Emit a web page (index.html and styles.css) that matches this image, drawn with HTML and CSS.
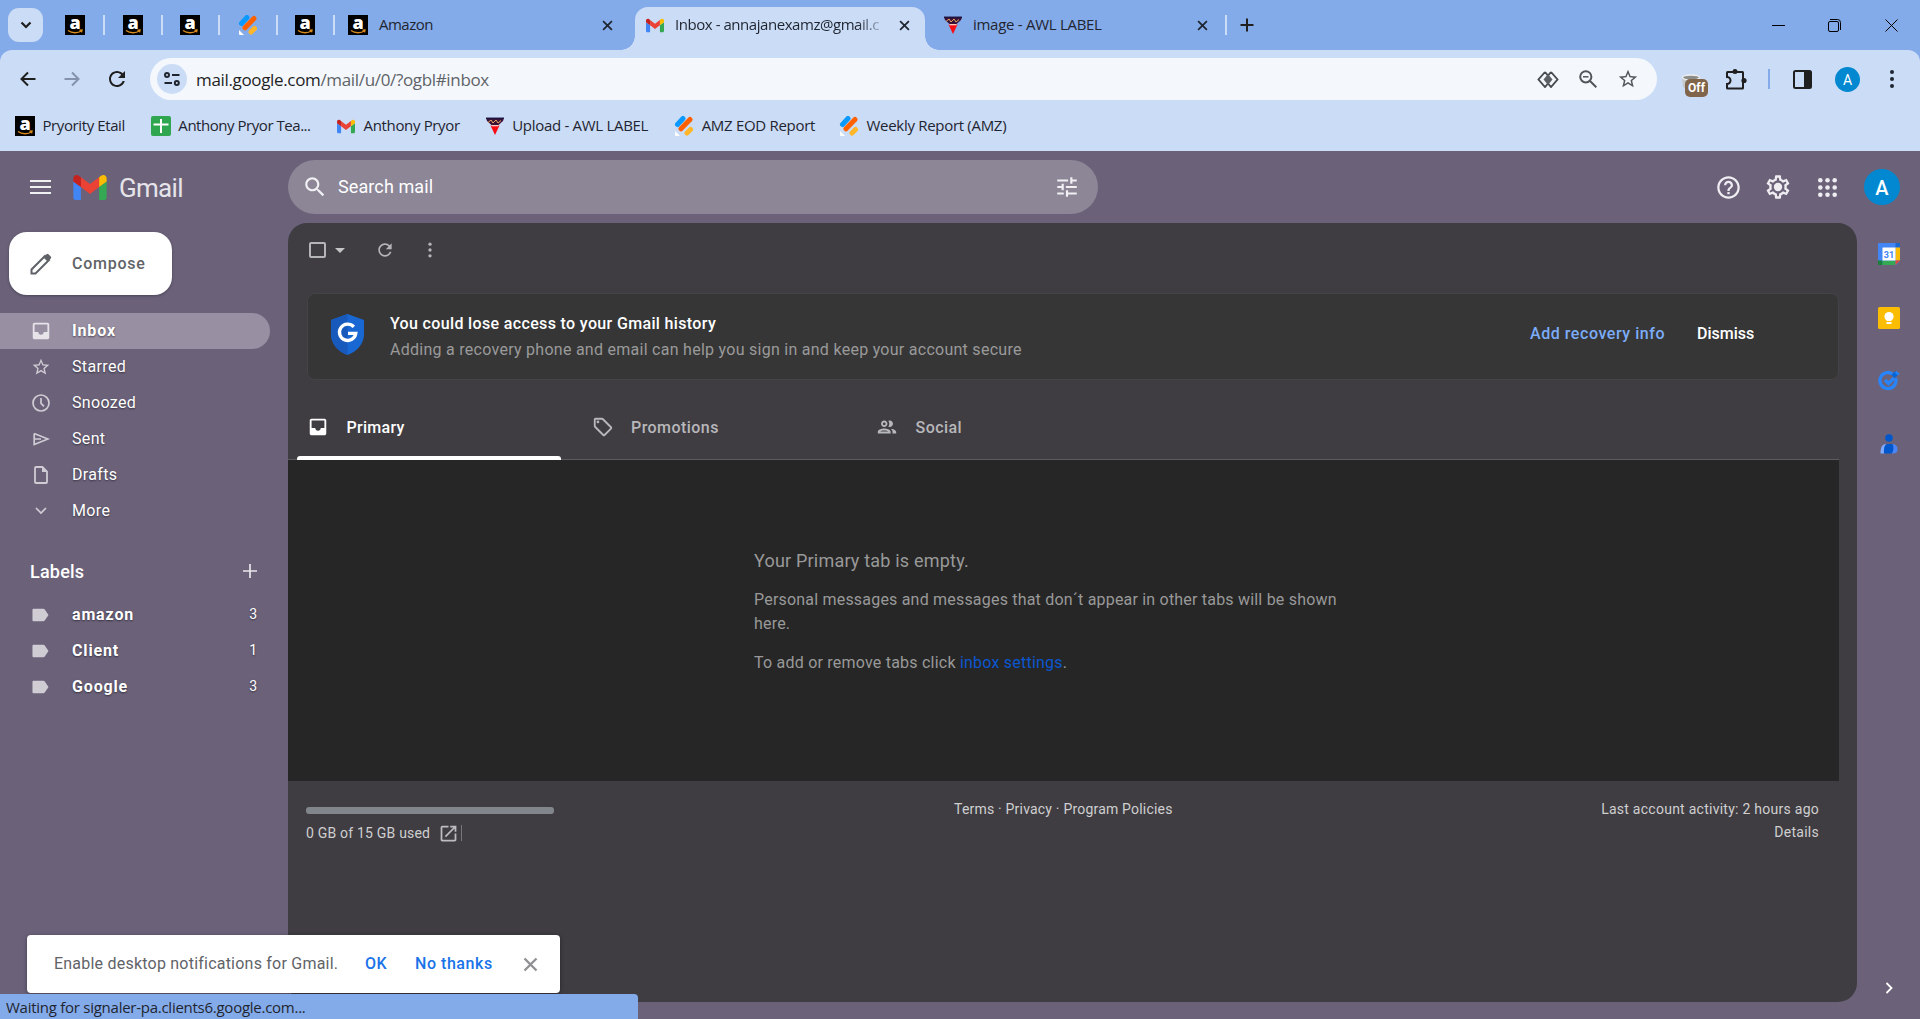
FILE: index.html
```html
<!DOCTYPE html>
<html lang="en">
<head>
    <meta charset="UTF-8">
    <meta name="viewport" content="width=device-width, initial-scale=1.0">
    <title>Inbox - Gmail</title>
    <link rel="stylesheet" href="styles.css">
</head>
<body>
    <!-- Shared icons -->
    <svg class="sprite" aria-hidden="true">
        <symbol id="amazon" viewBox="0 0 20 20">
            <rect width="20" height="20" fill="#000"/>
            <text x="10" y="14" text-anchor="middle" font-family="Open Sans, sans-serif" font-weight="800" font-size="18" fill="#fff">a</text>
            <path d="M3 15.500c4 3 10 3 13.500.3M14.500 15.200l2.500-.2-.5 2.300" fill="none" stroke="#d98a1c" stroke-width="1.400"/>
        </symbol>
        <symbol id="jot" viewBox="0 0 20 20">
            <path d="M3.500 8.500l5.500-6" stroke="#0a99ff" stroke-width="5" stroke-linecap="round"/>
            <path d="M7 12.800l9-9.300" stroke="#ff6100" stroke-width="5" stroke-linecap="round"/>
            <path d="M13 17l3.500-3.500" stroke="#ffb629" stroke-width="5" stroke-linecap="round"/>
            <path d="M1 15l5 5H2a1 1 0 0 1-1-1z" fill="#fff"/>
        </symbol>
        <symbol id="gmail" viewBox="52 42 88 66">
            <path fill="#4285f4" d="M58 108h14V74L52 59v43c0 3.320 2.690 6 6 6"/>
            <path fill="#34a853" d="M120 108h14c3.320 0 6-2.690 6-6V59l-20 15"/>
            <path fill="#fbbc04" d="M120 48v26l20-15v-8c0-7.420-8.470-11.650-14.400-7.200"/>
            <path fill="#ea4335" d="M72 74V48l24 18 24-18v26L96 92"/>
            <path fill="#c5221f" d="M52 51v8l20 15V48l-5.600-4.200c-5.940-4.450-14.400-.22-14.400 7.200"/>
        </symbol>
        <symbol id="awl" viewBox="0 0 20 20">
            <path d="M1 2h18l-1 3-4.500 4h-7L2 5z" fill="#3a1238"/>
            <path d="M3 6.500L6 4l2 3 3-3 2 3 3-2.500" fill="none" stroke="#e8a860" stroke-width="1"/>
            <path d="M1 2.300h18" stroke="#1d1440" stroke-width="1.500"/>
            <path d="M5.500 9.500h9L10 19z" fill="#f80b12"/>
            <path d="M6.500 9.700h7" stroke="#ffd5c8" stroke-width="1.200"/>
        </symbol>
        <symbol id="sheet" viewBox="0 0 20 20">
            <rect width="20" height="20" rx="2" fill="#31a650"/>
            <path d="M10 3v14M2.500 8.500h15" stroke="#fff" stroke-width="2"/>
        </symbol>
        <symbol id="x" viewBox="0 0 10 10"><path d="M1 1l8 8M9 1L1 9" fill="none" stroke="currentColor" stroke-width="1.600"/></symbol>
        <symbol id="star" viewBox="0 0 24 24"><path fill="currentColor" d="M22 9.240l-7.190-.62L12 2 9.190 8.630 2 9.240l5.460 4.730L5.820 21 12 17.270 18.180 21l-1.630-7.030L22 9.240zM12 15.400l-3.760 2.270 1-4.280-3.320-2.880 4.380-.38L12 6.100l1.710 4.040 4.380.38-3.320 2.880 1 4.280L12 15.400z"/></symbol>
        <symbol id="refresh" viewBox="0 0 24 24"><path fill="currentColor" d="M17.650 6.350C16.200 4.900 14.210 4 12 4c-4.420 0-7.990 3.580-7.990 8s3.570 8 7.990 8c3.730 0 6.840-2.550 7.730-6h-2.080c-.82 2.330-3.040 4-5.650 4-3.310 0-6-2.690-6-6s2.690-6 6-6c1.660 0 3.140.69 4.220 1.780L13 11h7V4l-2.350 2.350z"/></symbol>
        <symbol id="dots" viewBox="0 0 24 24"><g fill="currentColor"><circle cx="12" cy="5" r="2"/><circle cx="12" cy="12" r="2"/><circle cx="12" cy="19" r="2"/></g></symbol>
        <symbol id="inbox" viewBox="0 0 24 24"><path fill="currentColor" d="M19 3H5c-1.100 0-2 .9-2 2v14c0 1.100.89 2 2 2h14c1.100 0 2-.9 2-2V5c0-1.100-.9-2-2-2zm0 10h-4c0 1.660-1.350 3-3 3s-3-1.340-3-3H5V5h14v8z"/></symbol>
        <symbol id="label" viewBox="0 0 18 14"><path fill="currentColor" d="M1.500 0.500H12a2 2 0 0 1 1.500.8L17.500 7l-4 5.700a2 2 0 0 1-1.500.8H1.500A1 1 0 0 1 .5 12.500v-11a1 1 0 0 1 1-1z"/></symbol>
    </svg>

    <!-- Browser chrome -->
    <div class="tabstrip">
        <div class="tab-search"><svg width="12" height="8" viewBox="0 0 12 8"><path d="M1.500 1.500L6 6l4.500-4.500" fill="none" stroke="#1f1f1f" stroke-width="2.200"/></svg></div>
        <div class="pinned"><svg class="fav"><use href="#amazon"/></svg></div>
        <div class="pinned"><svg class="fav"><use href="#amazon"/></svg></div>
        <div class="pinned"><svg class="fav"><use href="#amazon"/></svg></div>
        <div class="pinned"><svg class="fav"><use href="#jot"/></svg></div>
        <div class="pinned"><svg class="fav"><use href="#amazon"/></svg></div>
        <div class="tab tab-first">
            <svg class="fav"><use href="#amazon"/></svg>
            <span class="tab-title t-amazon">Amazon</span>
            <svg class="close"><use href="#x"/></svg>
        </div>
        <div class="tab active">
            <svg class="fav gm"><use href="#gmail"/></svg>
            <span class="tab-title t-inbox">Inbox - annajanexamz@gmail.c</span>
            <svg class="close"><use href="#x"/></svg>
        </div>
        <div class="tab tab-last">
            <svg class="fav"><use href="#awl"/></svg>
            <span class="tab-title t-image">image - AWL LABEL</span>
            <svg class="close"><use href="#x"/></svg>
        </div>
        <svg class="new-tab" width="14" height="14" viewBox="0 0 14 14"><path d="M7 0.500v13M.5 7h13" stroke="#1f1f1f" stroke-width="2"/></svg>
        <div class="window-buttons">
            <svg width="13" height="13" viewBox="0 0 13 13"><path d="M0 6.500h13" stroke="#000"/></svg>
            <svg width="13" height="13" viewBox="0 0 13 13"><path d="M2 .5h7.500a3 3 0 0 1 3 3V11" fill="none" stroke="#000"/><rect x=".5" y="2.500" width="10" height="10" rx="1.500" fill="none" stroke="#000"/></svg>
            <svg width="13" height="13" viewBox="0 0 13 13"><path d="M.5.5l12 12M12.500.5l-12 12" stroke="#000"/></svg>
        </div>
    </div>

    <div class="chrome-bar">
        <div class="toolbar">
            <svg class="nav-icon" viewBox="0 0 16 16"><path d="M15.500 8H2M8 1.500L1.500 8 8 14.500" fill="none" stroke="#1f1f1f" stroke-width="2"/></svg>
            <svg class="nav-icon fwd" viewBox="0 0 16 16"><path d="M.5 8H14M8 1.500L14.500 8 8 14.500" fill="none" stroke="#8492ab" stroke-width="2"/></svg>
            <svg class="reload"><use href="#refresh"/></svg>
            <div class="omnibox">
                <div class="site-info"><svg width="16" height="14" viewBox="0 0 16 14" fill="none" stroke="#1f2530" stroke-width="2"><circle cx="3" cy="3" r="2"/><path d="M8 3h7.500M.5 11H8"/><circle cx="12.800" cy="11" r="2"/></svg></div>
                <span class="url">mail.google.com<span>/mail/u/0/?ogbl#inbox</span></span>
                <svg class="omni-icon" width="22" height="17" viewBox="0 0 22 17"><path d="M8 1L1.500 8.500 8 16l3-3.500M14 1l6.500 7.500L14 16l-3-3.500M8 1l3 3.500L14 1" fill="none" stroke="#474a4e" stroke-width="1.900"/><path d="M11 3l4.500 5.500L11 14 6.500 8.500z" fill="#5c5f63"/></svg>
                <svg class="omni-icon" width="18" height="18" viewBox="0 0 18 18" fill="none" stroke="#515458" stroke-width="2"><circle cx="6.800" cy="6.800" r="5.600"/><path d="M11 11l6.300 6.300"/><path d="M4 6.800h5.500" stroke-width="1.500"/></svg>
                <svg class="omni-icon star"><use href="#star"/></svg>
            </div>
            <div class="bucket">
                <svg width="20" height="16" viewBox="0 0 20 16"><path d="M1 4l1 9 3 2V5z" fill="#c6c9cc"/><ellipse cx="10" cy="3.500" rx="8.500" ry="2.500" fill="#8c8c88" stroke="#eee" stroke-width="1.300"/></svg>
                <span class="badge">Off</span>
            </div>
            <svg class="puzzle" width="22" height="21" viewBox="0 0 22 21"><path d="M2.500 3h15a.5.5 0 0 1 .5.500V19a.5.5 0 0 1-.5.500h-15A.5.5 0 0 1 2 19v-4a3.400 3.400 0 0 0 0-7V3.500A.5.5 0 0 1 2.500 3z" fill="none" stroke="#1f1f1f" stroke-width="2"/><circle cx="10" cy="2.500" r="2.500" fill="#1f1f1f"/><circle cx="19" cy="11.500" r="2.600" fill="#1f1f1f"/></svg>
            <div class="divider"></div>
            <svg width="19" height="19" viewBox="0 0 19 19"><rect x="1" y="1" width="17" height="17" rx="1.500" fill="none" stroke="#1f1f1f" stroke-width="2"/><path d="M11 1h7v17h-7z" fill="#1f1f1f"/></svg>
            <div class="avatar avatar-sm">A</div>
            <svg class="menu-dots"><use href="#dots"/></svg>
        </div>
        <div class="bookmarks">
            <svg class="fav"><use href="#amazon"/></svg><span class="b1">Pryority Etail</span>
            <svg class="fav"><use href="#sheet"/></svg><span class="b2">Anthony Pryor Tea...</span>
            <svg class="fav gm"><use href="#gmail"/></svg><span class="b3">Anthony Pryor</span>
            <svg class="fav"><use href="#awl"/></svg><span>Upload - AWL LABEL</span>
            <svg class="fav"><use href="#jot"/></svg><span class="b5">AMZ EOD Report</span>
            <svg class="fav"><use href="#jot"/></svg><span>Weekly Report (AMZ)</span>
        </div>
    </div>

    <!-- Gmail -->
    <div class="app">
        <header class="header">
            <div class="brand">
                <svg width="21" height="14" viewBox="0 0 21 14"><path d="M0 1h21M0 7h21M0 13h21" stroke="#f0eff2" stroke-width="2"/></svg>
                <svg class="logo" width="34" height="25"><use href="#gmail"/></svg>
                <span>Gmail</span>
            </div>
            <div class="search">
                <svg width="26" height="26" viewBox="0 0 24 24"><path fill="#f1f0f3" d="M15.500 14h-.79l-.28-.27C15.410 12.590 16 11.110 16 9.500 16 5.910 13.090 3 9.500 3S3 5.910 3 9.500 5.910 16 9.500 16c1.610 0 3.090-.59 4.230-1.570l.27.28v.79l5 4.990L20.490 19l-4.990-5zm-6 0C7.010 14 5 11.990 5 9.500S7.010 5 9.500 5 14 7.010 14 9.500 11.990 14 9.500 14z"/></svg>
                <span>Search mail</span>
                <svg width="26" height="26" viewBox="0 0 24 24"><path fill="#f1f0f3" d="M3 17v2h6v-2H3zM3 5v2h10V5H3zm10 16v-2h8v-2h-8v-2h-2v6h2zM7 9v2H3v2h4v2h2V9H7zm14 4v-2H11v2h10zm-6-4h2V7h4V5h-4V3h-2v6z"/></svg>
            </div>
            <div class="header-actions">
                <svg width="27" height="27" viewBox="0 0 24 24"><path fill="#efedf1" d="M11 18h2v-2h-2v2zm1-16C6.480 2 2 6.480 2 12s4.480 10 10 10 10-4.480 10-10S17.520 2 12 2zm0 18c-4.410 0-8-3.590-8-8s3.590-8 8-8 8 3.590 8 8-3.590 8-8 8zm0-14c-2.210 0-4 1.790-4 4h2c0-1.100.9-2 2-2s2 .9 2 2c0 2-3 1.750-3 5h2c0-2.250 3-2.500 3-5 0-2.210-1.790-4-4-4z"/></svg>
                <svg class="gear" width="28" height="28" viewBox="0 0 24 24"><path fill="#efedf1" d="M19.430 12.980c.04-.32.07-.64.07-.98 0-.34-.03-.66-.07-.98l2.110-1.650c.19-.15.24-.42.12-.64l-2-3.460c-.09-.16-.26-.25-.44-.25-.06 0-.12.01-.17.03l-2.490 1c-.52-.4-1.080-.73-1.690-.98l-.38-2.650C14.460 2.180 14.250 2 14 2h-4c-.25 0-.46.18-.49.42l-.38 2.650c-.61.25-1.170.59-1.690.98l-2.490-1c-.06-.02-.12-.03-.18-.03-.17 0-.34.09-.43.25l-2 3.460c-.13.22-.07.49.12.64l2.110 1.650c-.04.32-.07.65-.07.98 0 .33.03.66.07.98l-2.110 1.650c-.19.15-.24.42-.12.64l2 3.460c.09.16.26.25.44.25.06 0 .12-.01.17-.03l2.490-1c.52.4 1.080.73 1.690.98l.38 2.650c.03.24.24.42.49.42h4c.25 0 .46-.18.49-.42l.38-2.650c.61-.25 1.170-.59 1.690-.98l2.490 1c.06.02.12.03.18.03.17 0 .34-.09.43-.25l2-3.460c.12-.22.07-.49-.12-.64l-2.110-1.650zm-1.980-1.710c.04.31.05.52.05.73 0 .21-.02.43-.05.73l-.14 1.130.89.7 1.080.84-.7 1.210-1.270-.51-1.040-.42-.9.68c-.43.32-.84.56-1.250.73l-1.060.43-.16 1.130-.2 1.350h-1.400l-.19-1.350-.16-1.130-1.060-.43c-.43-.18-.83-.41-1.230-.71l-.91-.7-1.060.43-1.270.51-.7-1.210 1.080-.84.89-.7-.14-1.130c-.03-.31-.05-.54-.05-.74s.02-.43.05-.73l.14-1.130-.89-.7-1.080-.84.7-1.210 1.270.51 1.040.42.9-.68c.43-.32.84-.56 1.250-.73l1.060-.43.16-1.130.2-1.350h1.390l.19 1.350.16 1.130 1.060.43c.43.18.83.41 1.230.71l.91.7 1.060-.43 1.270-.51.7 1.210-1.070.85-.89.7.14 1.130z"/><circle cx="12" cy="12" r="3.600" fill="#efedf1"/></svg>
                <svg width="19" height="19" viewBox="0 0 19 19" fill="#efedf1"><circle cx="2.300" cy="2.300" r="2.300"/><circle cx="9.500" cy="2.300" r="2.300"/><circle cx="16.700" cy="2.300" r="2.300"/><circle cx="2.300" cy="9.500" r="2.300"/><circle cx="9.500" cy="9.500" r="2.300"/><circle cx="16.700" cy="9.500" r="2.300"/><circle cx="2.300" cy="16.700" r="2.300"/><circle cx="9.500" cy="16.700" r="2.300"/><circle cx="16.700" cy="16.700" r="2.300"/></svg>
                <div class="avatar avatar-lg">A</div>
            </div>
        </header>

        <div class="body">
            <nav class="sidebar">
                <div class="compose">
                    <svg width="22" height="22" viewBox="0 0 22 22"><path d="M1.500 20.500v-4L15 3l4 4L5.500 20.500z" fill="none" stroke="#5f6368" stroke-width="2"/><path d="M13.500 4.500l3-3.200a1.500 1.500 0 0 1 2 0l2.200 2.200a1.500 1.500 0 0 1 0 2l-3.200 3z" fill="#5f6368"/></svg>
                    <span>Compose</span>
                </div>
                <ul class="folders">
                    <li class="selected"><svg width="22" height="22"><use href="#inbox"/></svg><span>Inbox</span></li>
                    <li><svg width="20" height="20"><use href="#star"/></svg><span>Starred</span></li>
                    <li><svg width="18" height="18" viewBox="0 0 18 18" fill="none" stroke="currentColor" stroke-width="1.700"><circle cx="9" cy="9" r="8"/><path d="M9 4v5.300l3 3"/></svg><span>Snoozed</span></li>
                    <li><svg width="17" height="14" viewBox="0 0 17 14" fill="none" stroke="currentColor" stroke-width="1.700"><path d="M1.200 1.500L15 7 1.200 12.500V1.500M1.500 7H8"/></svg><span>Sent</span></li>
                    <li><svg width="14" height="18" viewBox="0 0 14 18"><path d="M1 2a1 1 0 0 1 1-1h6.500L13 5.500V16a1 1 0 0 1-1 1H2a1 1 0 0 1-1-1z" fill="none" stroke="currentColor" stroke-width="1.800"/><path d="M8 1l5.500 5H8z" fill="currentColor"/></svg><span>Drafts</span></li>
                    <li><svg width="12" height="8" viewBox="0 0 12 8"><path d="M1 1l5 5 5-5" fill="none" stroke="currentColor" stroke-width="1.700"/></svg><span>More</span></li>
                </ul>
                <div class="labels-title"><span>Labels</span><svg width="14" height="14" viewBox="0 0 14 14"><path d="M7 0v14M0 7h14" stroke="#e9e7ec" stroke-width="1.700"/></svg></div>
                <ul class="labels">
                    <li><svg width="17" height="14"><use href="#label"/></svg><span>amazon</span><em>3</em></li>
                    <li><svg width="17" height="14"><use href="#label"/></svg><span>Client</span><em>1</em></li>
                    <li><svg width="17" height="14"><use href="#label"/></svg><span>Google</span><em>3</em></li>
                </ul>
            </nav>

            <main class="panel">
                <div class="actions">
                    <span class="checkbox"></span>
                    <span class="caret"></span>
                    <svg class="act-refresh"><use href="#refresh"/></svg>
                    <svg class="act-dots"><use href="#dots"/></svg>
                </div>
                <div class="banner">
                    <svg class="shield" width="33" height="41" viewBox="0 0 33 41">
                        <path d="M16.500 0L33 6v14c0 10-7 17.500-16.500 21C7 37.500 0 30 0 20V6z" fill="#1967d2"/>
                        <path d="M16.500 0v41C7 37.500 0 30 0 20V6z" fill="#185abc"/>
                        <path d="M22.800 12.800a8.200 8.200 0 1 0 2 6.500H17" fill="none" stroke="#fff" stroke-width="3.300"/>
                    </svg>
                    <div class="banner-text">
                        <p class="banner-title">You could lose access to your Gmail history</p>
                        <p class="banner-sub">Adding a recovery phone and email can help you sign in and keep your account secure</p>
                    </div>
                    <a class="recover">Add recovery info</a>
                    <a class="dismiss">Dismiss</a>
                </div>
                <div class="tabs">
                    <div class="mail-tab current"><svg width="22" height="22"><use href="#inbox"/></svg><span>Primary</span></div>
                    <div class="mail-tab"><svg width="22" height="22" viewBox="0 0 24 24"><path fill="currentColor" d="M21.410 11.580l-9-9C12.050 2.220 11.550 2 11 2H4c-1.100 0-2 .9-2 2v7c0 .55.22 1.050.59 1.420l9 9c.36.36.86.58 1.410.58s1.050-.22 1.410-.59l7-7c.37-.36.59-.86.59-1.410s-.23-1.060-.59-1.420zM13 20.010L4 11V4h7v-.01l9 9-7 7.020z"/><circle cx="6.500" cy="6.500" r="1.500" fill="currentColor"/></svg><span>Promotions</span></div>
                    <div class="mail-tab"><svg width="22" height="22" viewBox="0 0 24 24"><path fill="currentColor" d="M9 13.750c-2.340 0-7 1.170-7 3.500V19h14v-1.750c0-2.330-4.660-3.500-7-3.500zM4.340 17c.84-.58 2.870-1.250 4.660-1.250s3.820.67 4.660 1.250H4.340zM9 12c1.930 0 3.500-1.570 3.500-3.500S10.930 5 9 5 5.500 6.570 5.500 8.500 7.070 12 9 12zm0-5c.83 0 1.500.67 1.500 1.500S9.830 10 9 10s-1.500-.67-1.500-1.500S8.170 7 9 7zm7.040 6.810c1.160.84 1.960 1.960 1.960 3.440V19h4v-1.750c0-2.020-3.500-3.170-5.960-3.440zM15 12c1.930 0 3.500-1.570 3.500-3.500S16.930 5 15 5c-.54 0-1.040.13-1.500.35.63.89 1 1.980 1 3.150s-.37 2.260-1 3.150c.46.22.96.35 1.500.35z"/></svg><span>Social</span></div>
                </div>
                <div class="empty">
                    <p class="empty-title">Your Primary tab is empty.</p>
                    <p class="empty-line">Personal messages and messages that don´t appear in other tabs will be shown<br>here.</p>
                    <p class="empty-last">To add or remove tabs click <a>inbox settings</a>.</p>
                </div>
                <div class="footer">
                    <div class="storage">
                        <div class="storage-bar"></div>
                        <div class="storage-text"><span>0 GB of 15 GB used</span><svg width="21" height="21" viewBox="0 0 24 24"><path fill="#bdbdbf" d="M19 19H5V5h7V3H5c-1.110 0-2 .9-2 2v14c0 1.100.89 2 2 2h14c1.100 0 2-.9 2-2v-7h-2v7zM14 3v2h3.590l-9.830 9.830 1.410 1.410L19 6.410V10h2V3h-7z"/></svg><i></i></div>
                    </div>
                    <div class="terms">Terms · Privacy · Program Policies</div>
                    <div class="activity"><span>Last account activity: 2 hours ago</span><br><span class="details">Details</span></div>
                </div>
            </main>

            <aside class="side-panel">
                <svg width="22" height="22" viewBox="0 0 22 22"><path d="M1 0h20v22H1z" fill="#4285f4"/><path d="M17.500 0H21a1 1 0 0 1 1 1v3.500h-4.500z" fill="#1967d2"/><path d="M17.500 4.500H22v13h-4.500z" fill="#fbbc04"/><path d="M0 1a1 1 0 0 1 1-1h3.500v17.500H0z" fill="#4285f4"/><path d="M0 17.500h4.500V22H1a1 1 0 0 1-1-1z" fill="#188038"/><path d="M4.500 17.500h13V22h-13z" fill="#34a853"/><path d="M17.500 17.500H22L17.500 22z" fill="#ea4335"/><path d="M18 22l4-4v4z" fill="#6b627a"/><path d="M4.500 4.500h13v13h-13z" fill="#fff"/><text x="11" y="14.600" text-anchor="middle" font-family="Roboto, sans-serif" font-weight="700" font-size="9" fill="#4285f4">31</text></svg>
                <svg width="22" height="22" viewBox="0 0 22 22"><rect width="22" height="22" rx="1.500" fill="#fbbc04"/><circle cx="11" cy="9.500" r="4.600" fill="#fff"/><path d="M8.500 12h5v1.800h-5zM8.500 15h5v2h-5z" fill="#fff"/></svg>
                <svg width="22" height="22" viewBox="0 0 22 22"><path d="M17.500 8a8 8 0 1 1-3-4" fill="none" stroke="#2684fc" stroke-width="3.300"/><path d="M7 10l3.500 3.500L16 8" fill="none" stroke="#2684fc" stroke-width="3.300"/><path d="M15 6.500L19 2.500" stroke="#0066da" stroke-width="4.500"/><path d="M18.500 1l3 3-1.500 1.500-3-3z" fill="#2684fc"/></svg>
                <svg width="18" height="20" viewBox="0 0 18 20"><circle cx="9" cy="4" r="3.800" fill="#0057cc"/><path d="M6 10C2 10 .5 13.500.5 19.500h4z" fill="#80aaff"/><path d="M12 10c4 0 5.500 2.500 5.500 5.500s-2 4-5.500 4z" fill="#4d85f5"/><path d="M8 10h4c2 0 2 9.500-1 9.500H4C3.500 14 4.500 10 8 10z" fill="#0057cc"/></svg>
                <svg class="expand" width="8" height="12" viewBox="0 0 8 12"><path d="M1.500 1l5 5-5 5" fill="none" stroke="#fff" stroke-width="1.800"/></svg>
            </aside>
        </div>
    </div>

    <!-- Floating messages -->
    <div class="notify">
        <span class="n-text">Enable desktop notifications for Gmail.</span>
        <a class="n-ok">OK</a>
        <a class="n-no">No thanks</a>
        <svg class="n-close"><use href="#x"/></svg>
    </div>
    <div class="status">Waiting for signaler-pa.clients6.google.com...</div>
</body>
</html>
```

FILE: styles.css
```css
/* General Styling */
* {
    box-sizing: border-box;
}

body {
    font-family: 'Roboto', sans-serif;
    margin: 0;
    height: 1019px;
    overflow: hidden;
    display: flex;
    flex-direction: column;
    background: #6b627a;
    position: relative;
    font-size: 16px;
}

p, ul {
    margin: 0;
    padding: 0;
    list-style: none;
}

svg {
    display: block;
    flex: none;
}

span, a, em {
    white-space: nowrap;
}

.sprite {
    display: none;
}

/* Tab strip */
.tabstrip {
    height: 50px;
    background: #84abe9;
    display: flex;
    align-items: center;
    font-family: 'Open Sans', sans-serif;
    font-size: 15px;
    letter-spacing: -0.2px;
    color: #1f2530;
}

.tab-search {
    width: 35px;
    height: 34px;
    margin-left: 8px;
    margin-right: 4px;
    border-radius: 11px;
    background: #cbdcf6;
    display: flex;
    align-items: center;
    justify-content: center;
}

.fav {
    width: 20px;
    height: 20px;
}

.fav.gm {
    width: 18px;
    height: 15px;
}

.pinned {
    width: 57.5px;
    height: 20px;
    display: flex;
    justify-content: center;
    border-right: 2px solid #cbdcf6;
}

.pinned:nth-child(2) {
    width: 58px;
}

.tab {
    display: flex;
    align-items: center;
}

.tab-title {
    margin-top: -2px;
}

.close {
    width: 11px;
    height: 11px;
    color: #1f2530;
    margin-left: auto;
}

.tab-first {
    width: 300px;
    padding-left: 13px;
    padding-right: 22px;
    gap: 10px;
}

.t-amazon {
    margin-left: 1px;
    letter-spacing: -0.5px;
}

.active {
    width: 290px;
    height: 43px;
    margin-top: 7px;
    padding: 0 15px 7px 11px;
    border-radius: 13px 13px 0 0;
    background: #cbdcf6;
    position: relative;
}

/* Curved feet of the selected tab */
.active::before,
.active::after {
    content: "";
    position: absolute;
    bottom: 0;
    width: 14px;
    height: 14px;
}

.active::before {
    left: -14px;
    background: radial-gradient(circle at 0 0, transparent 13.500px, #cbdcf6 14px);
}

.active::after {
    right: -14px;
    background: radial-gradient(circle at 100% 0, transparent 13.500px, #cbdcf6 14px);
}

.t-inbox {
    width: 208px;
    margin-left: 11px;
    letter-spacing: -0.45px;
    -webkit-mask-image: linear-gradient(90deg, #000 88%, transparent 102%);
    mask-image: linear-gradient(90deg, #000 88%, transparent 102%);
}

.tab-last {
    width: 302px;
    height: 20px;
    padding-left: 18px;
    padding-right: 17px;
    gap: 10px;
    border-right: 2px solid #cbdcf6;
}

.t-image {
    letter-spacing: -0.28px;
}

.new-tab {
    margin-left: 13px;
}

.window-buttons {
    display: flex;
    gap: 43.500px;
    margin-left: auto;
    margin-right: 22.500px;
}

/* Toolbar */
.chrome-bar {
    height: 101px;
    background: linear-gradient(#84abe9 20px, #cbdcf6 20px);
    font-family: 'Open Sans', sans-serif;
    color: #1f2530;
}

.toolbar {
    height: 58px;
    display: flex;
    align-items: center;
    padding-left: 20px;
    background: #cbdcf6;
    border-radius: 12px 12px 0 0;
}

.nav-icon {
    width: 16px;
    height: 16px;
}

.fwd {
    margin-left: 28px;
}

.reload {
    width: 24px;
    height: 24px;
    margin-left: 25px;
    margin-right: 21px;
    color: #1f1f1f;
}

.omnibox {
    width: 1507px;
    height: 42px;
    border-radius: 21px;
    background: #f4f8fd;
    display: flex;
    align-items: center;
    padding: 0 18px 0 7px;
}

.site-info {
    width: 30px;
    height: 30px;
    border-radius: 50%;
    background: #cbdcf6;
    display: flex;
    align-items: center;
    justify-content: center;
}

.url {
    margin-left: 9px;
    margin-right: auto;
    font-size: 17px;
    letter-spacing: -0.34px;
    color: #1f1f1f;
}

.url span {
    color: #5f6368;
}

.omni-icon {
    margin-left: 20px;
}

.omni-icon.star {
    width: 22px;
    height: 22px;
    color: #515458;
}

.bucket {
    width: 28px;
    height: 24px;
    margin-left: 24px;
    margin-top: 13px;
    position: relative;
}

.badge {
    position: absolute;
    left: 4px;
    top: 5px;
    width: 23px;
    height: 18px;
    border-radius: 5px;
    background: #80654a;
    color: #fff;
    font-family: 'Roboto', sans-serif;
    font-weight: 700;
    font-size: 12px;
    line-height: 19px;
    text-align: center;
}

.puzzle {
    margin-left: 16px;
}

.divider {
    width: 2px;
    height: 20px;
    margin: 0 23px 0 21px;
    background: #84abe9;
}

.avatar {
    border-radius: 50%;
    background: #0288d1;
    color: #fff;
    text-align: center;
    font-family: 'Roboto', sans-serif;
}

.avatar-sm {
    width: 25px;
    height: 25px;
    margin-left: 23px;
    font-size: 14px;
    line-height: 26px;
}

.avatar-lg {
    width: 36px;
    height: 36px;
    margin-left: 27px;
    font-size: 20px;
    line-height: 38px;
    font-weight: 500;
}

.menu-dots {
    width: 24px;
    height: 24px;
    margin-left: 20px;
}

/* Bookmarks */
.bookmarks {
    height: 36px;
    display: flex;
    align-items: center;
    padding-left: 15px;
    font-size: 15px;
    letter-spacing: -0.3px;
}

.bookmarks span {
    margin-left: 7.500px;
    margin-right: 26px;
    margin-top: -2px;
}

.bookmarks .b1 {
    letter-spacing: -0.4px;
}

.bookmarks .b2 {
    letter-spacing: -0.46px;
}

.bookmarks .b3 {
    letter-spacing: -0.35px;
    margin-left: 9px;
    margin-right: 25px;
}

.bookmarks .b5 {
    margin-right: 24px;
}

/* Gmail header */
.header {
    height: 72px;
    display: flex;
    align-items: center;
}

.brand {
    width: 288px;
    padding-left: 30px;
    display: flex;
    align-items: center;
    color: #e6e4e9;
    font-size: 26px;
    letter-spacing: -0.7px;
}

.logo {
    margin-left: 22px;
    margin-right: 12px;
}

.brand span {
    margin-top: 1px;
}

.search {
    width: 810px;
    height: 54px;
    border-radius: 27px;
    background: #8c8697;
    display: flex;
    align-items: center;
    padding: 0 18px 0 14px;
    color: #fff;
    font-size: 18px;
    letter-spacing: 0.1px;
}

.search span {
    margin-left: 10px;
    margin-right: auto;
    margin-top: -2px;
}

.header-actions {
    margin-left: auto;
    margin-right: 20px;
    display: flex;
    align-items: center;
}

.gear {
    margin-left: 22px;
    margin-right: 26px;
}

.body {
    display: flex;
    height: 796px;
}

/* Sidebar */
.sidebar {
    width: 288px;
    padding-top: 9px;
    color: #fff;
}

.compose {
    width: 163px;
    height: 63px;
    margin-left: 9px;
    border-radius: 18px;
    background: #fff;
    box-shadow: 0 1px 3px rgba(0, 0, 0, 0.3);
    display: flex;
    align-items: center;
    padding-left: 21px;
    color: #5f6368;
    font-weight: 500;
    letter-spacing: 0.75px;
}

.compose span {
    margin-left: 20px;
}

.folders {
    margin-top: 18px;
}

.folders li,
.labels li {
    width: 270px;
    height: 36px;
    display: grid;
    grid-template-columns: 24px 1fr auto;
    column-gap: 19px;
    align-items: center;
    padding-left: 29px;
    padding-right: 13px;
    letter-spacing: 0.35px;
    text-shadow: 0 1px 2px rgba(0, 0, 0, 0.5);
}

.folders span,
.labels span,
.labels em {
    margin-top: -2px;
}

.folders svg,
.labels svg {
    justify-self: center;
    color: #cfccd4;
}

.folders .selected {
    background: #988fa3;
    border-radius: 0 18px 18px 0;
    font-weight: 700;
    letter-spacing: 0.85px;
}

.folders .selected svg {
    color: #e6e3e9;
}

.labels-title {
    height: 36px;
    margin-top: 24px;
    padding: 0 31px 0 30px;
    display: flex;
    align-items: center;
    justify-content: space-between;
    font-size: 18px;
    font-weight: 500;
    letter-spacing: 0.2px;
}

.labels {
    margin-top: 8px;
}

.labels li {
    font-weight: 700;
    letter-spacing: 0.85px;
}

.labels svg {
    margin-right: 2px;
}

.labels em {
    font-style: normal;
    font-weight: 400;
    font-size: 14px;
    letter-spacing: 0;
}

/* Main panel */
.panel {
    width: 1569px;
    height: 779px;
    border-radius: 19px;
    background: #3f3d42;
    overflow: hidden;
}

.actions {
    height: 54px;
    padding-left: 21px;
    display: flex;
    align-items: center;
    color: #b5b4b7;
}

.checkbox {
    width: 17px;
    height: 16px;
    border: 2px solid #b5b4b7;
    border-radius: 2px;
}

.caret {
    margin-left: 9px;
    border: 5px solid transparent;
    border-top-color: #c5c4c7;
    border-bottom: 0;
}

.act-refresh {
    width: 20px;
    height: 20px;
    margin-left: 30px;
}

.act-dots {
    width: 20px;
    height: 20px;
    margin-left: 25px;
}

.banner {
    width: 1532px;
    height: 87px;
    margin: 16px 0 0 19px;
    border: 1px solid #444345;
    border-radius: 8px;
    background: #363636;
    display: flex;
    align-items: center;
    padding-left: 23px;
}

.shield {
    margin-top: -4px;
}

.banner-text {
    width: 1140px;
    margin-left: 26px;
    line-height: 26px;
}

.banner-title {
    color: #fff;
    font-weight: 500;
    letter-spacing: 0.35px;
}

.banner-sub {
    color: #9a9a9a;
    letter-spacing: 0.27px;
}

.recover,
.dismiss {
    font-weight: 500;
    margin-top: -7px;
}

.recover {
    color: #7cacf8;
    width: 167px;
    letter-spacing: 0.55px;
}

.dismiss {
    color: #fff;
}

.tabs {
    height: 80px;
    width: 1551px;
    padding-left: 9px;
    padding-top: 15px;
    display: flex;
    color: #b8b7ba;
    border-bottom: 1px solid #5c5b5e;
    font-weight: 500;
    letter-spacing: 0.45px;
}

.mail-tab {
    width: 284.500px;
    display: flex;
    align-items: center;
    padding-left: 10px;
    position: relative;
}

.mail-tab span {
    margin-left: 17.500px;
}

.current {
    color: #fff;
    letter-spacing: 0.3px;
}

.current::after {
    content: "";
    position: absolute;
    left: 0;
    bottom: -1px;
    width: 264px;
    height: 4px;
    border-radius: 3px 3px 0 0;
    background: #fff;
}

.empty {
    width: 1551px;
    height: 321px;
    background: #262626;
    color: #999;
    padding: 89px 0 0 466px;
    line-height: 24px;
    letter-spacing: 0.2px;
}

.empty-title {
    font-size: 18px;
}

.empty-line {
    margin-top: 15px;
}

.empty-last {
    margin-top: 15px;
    letter-spacing: 0.22px;
}

.empty a {
    color: #0b57d0;
}

/* Footer */
.footer {
    display: flex;
    padding: 17px 38px 0 18px;
    font-size: 14px;
    line-height: 23px;
    letter-spacing: 0.2px;
    color: #cfcfd0;
}

.storage {
    width: 648px;
    padding-top: 9px;
}

.storage-bar {
    width: 248px;
    height: 7px;
    border-radius: 3px;
    background: #80868b;
}

.storage-text {
    display: flex;
    align-items: center;
    margin-top: 7px;
}

.storage-text span {
    margin-top: 1px;
}

.storage-text svg {
    margin-left: 8px;
}

.storage-text i {
    width: 1px;
    height: 16px;
    margin-left: 2px;
    background: #77767a;
}

.activity {
    margin-left: auto;
    text-align: right;
    letter-spacing: 0.26px;
}

/* Right side panel */
.side-panel {
    width: 63px;
    display: flex;
    flex-direction: column;
    align-items: center;
    padding-top: 20px;
    gap: 41.500px;
}

.expand {
    margin-top: auto;
    margin-bottom: 25px;
}

/* Notification */
.notify {
    position: absolute;
    left: 27px;
    top: 935px;
    width: 533px;
    height: 58px;
    border-radius: 4px;
    background: #fff;
    box-shadow: 0 1px 4px rgba(0, 0, 0, 0.4);
    display: flex;
    align-items: center;
    padding-left: 27px;
    color: #5f6368;
}

.notify span,
.notify a {
    margin-top: -2px;
}

.n-text {
    width: 311px;
    letter-spacing: 0.22px;
}

.n-ok {
    width: 50px;
}

.n-no {
    width: 108px;
}

.n-ok,
.n-no {
    color: #1a73e8;
    font-weight: 500;
    letter-spacing: 0.55px;
}

.n-close {
    width: 15px;
    height: 15px;
    color: #8f9195;
}

.status {
    position: absolute;
    left: 0;
    bottom: 0;
    width: 638px;
    height: 25px;
    padding-left: 6px;
    border-radius: 0 4px 0 0;
    background: #84abe9;
    font-family: 'Open Sans', sans-serif;
    font-size: 15px;
    line-height: 27px;
    letter-spacing: -0.26px;
    color: #1f2530;
}
```
